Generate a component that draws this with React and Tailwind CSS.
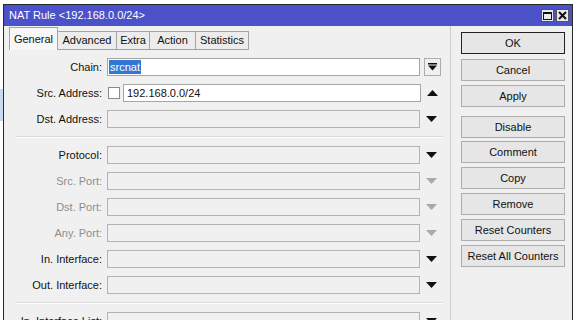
import React from "react";

const rows = [
  { label: "Chain:", kind: "chain" },
  { label: "Src. Address:", kind: "src" },
  { label: "Dst. Address:", arrow: "down" },
  { sep: true },
  { label: "Protocol:", arrow: "down" },
  { label: "Src. Port:", arrow: "down", off: true },
  { label: "Dst. Port:", arrow: "down", off: true },
  { label: "Any. Port:", arrow: "down", off: true },
  { label: "In. Interface:", arrow: "down" },
  { label: "Out. Interface:", arrow: "down" },
  { sep: true },
  { label: "In. Interface List:", arrow: "down" },
];

const buttons = [
  ["OK", "mb-[5px]"],
  ["Cancel", "mb-[4px]"],
  ["Apply", "mb-[9px]"],
  ["Disable", "mb-[3px]"],
  ["Comment", "mb-[4px]"],
  ["Copy", "mb-[4px]"],
  ["Remove", "mb-[4px]"],
  ["Reset Counters", "mb-[4px]"],
  ["Reset All Counters", ""],
];

const tabs = [
  ["General", "w-[49px]"],
  ["Advanced", "w-[59px]"],
  ["Extra", "w-[33px]"],
  ["Action", "w-[46px]"],
  ["Statistics", "w-[53px]"],
];

function Arrow({ dir = "down", off }) {
  return (
    <svg width="11" height="6" viewBox="0 0 11 6">
      <path
        d={dir === "down" ? "M0 0h11L5.5 6z" : "M0 6h11L5.5 0z"}
        fill={off ? "#a9a9a9" : "#111"}
      />
    </svg>
  );
}

function Row({ r }) {
  if (r.sep)
    return (
      <div className="ml-[11px] w-[428px] h-[2px] mb-[8px] border-t border-[#dadada] border-b border-b-white" />
    );
  return (
    <div className="flex items-center h-[18px] mb-[8px]">
      <div
        className={`w-[98px] text-right whitespace-nowrap ${r.off ? "text-[#8d8d8d]" : "text-[#111]"}`}
      >
        {r.label}
      </div>
      {r.kind === "src" ? (
        <>
          <div className="ml-[6px] w-[12px] h-[12px] bg-white border border-[#8a8a8a]" />
          <div className="ml-[3px] w-[298px] h-[18px] bg-white border border-[#a5a5a5] flex items-center pl-[3px] text-[#111]">
            192.168.0.0/24
          </div>
          <div className="w-[22px] flex justify-center">
            <Arrow dir="up" />
          </div>
        </>
      ) : r.kind === "chain" ? (
        <>
          <div className="ml-[5px] w-[313px] h-[18px] bg-white border border-[#a5a5a5] flex items-center pl-[1px]">
            <span className="bg-[#3178d4] text-white px-[1px] leading-[14px]">srcnat</span>
          </div>
          <div className="ml-[4px] w-[17px] h-[18px] border border-[#adadad] bg-[#f0f0f0] flex items-center justify-center">
            <svg width="9" height="8" viewBox="0 0 9 8">
              <rect x="0" y="0" width="9" height="1.5" fill="#111" />
              <path d="M0 2.5h9L4.5 7.5z" fill="#111" />
            </svg>
          </div>
        </>
      ) : (
        <>
          <div className="ml-[5px] w-[313px] h-[18px] bg-[#f0f0f0] border border-[#b3b3b3]" />
          <div className="w-[22px] flex justify-center">
            <Arrow off={r.off} />
          </div>
        </>
      )}
    </div>
  );
}

export default function App() {
  return (
    <div
      className="w-[573px] h-[320px] overflow-hidden bg-white flex flex-col text-[11px]"
      style={{ fontFamily: '"Liberation Sans", Arial, sans-serif' }}
    >
      <div className="h-[4px] bg-white shrink-0" />
      <div className="flex flex-1 min-h-0">
        <div className="w-[3px] shrink-0 flex flex-col">
          <div className="h-[85px]" />
          <div className="h-[32px] bg-[#c9d9ee]" />
        </div>
        <div className="flex-1 flex flex-col border-l border-t border-r border-[#2a2a2a] bg-[#f0f0f0] min-h-0">
          {/* title bar */}
          <div className="h-[21px] shrink-0 bg-[#4b51c9] flex items-center pl-[5px] pr-[3px]">
            <span className="text-white text-[11px]">NAT Rule &lt;192.168.0.0/24&gt;</span>
            <div className="ml-auto flex gap-[2px]">
              <div className="w-[13px] h-[13px] bg-[#e9e9e9] border border-[#555] flex items-center justify-center">
                <div className="w-[9px] h-[8px] border border-[#111] border-t-2" />
              </div>
              <div className="w-[13px] h-[13px] bg-[#e9e9e9] border border-[#555] flex items-center justify-center">
                <svg width="9" height="9" viewBox="0 0 9 9">
                  <path d="M1 1l7 7M8 1l-7 7" stroke="#111" strokeWidth="2" />
                </svg>
              </div>
            </div>
          </div>

          <div className="flex flex-1 min-h-0">
            {/* left panel */}
            <div className="w-[447px] shrink-0 border-r border-[#cdcdcd] flex flex-col min-h-0">
              <div className="flex items-end h-[24px] mt-[1px] pl-[5px]">
                {tabs.map(([t, w], i) => (
                  <div
                    key={t}
                    className={`${w} flex items-center justify-center border-[#a3a3a3] text-[#111] ${
                      i === 0
                        ? "h-[23px] border-l border-t border-r bg-[#f7f7f7]"
                        : "h-[19px] border-t border-r border-b bg-[#ececec]"
                    }`}
                  >
                    {t}
                  </div>
                ))}
              </div>
              <div className="pt-[8px]">
                {rows.map((r, i) => (
                  <Row key={i} r={r} />
                ))}
              </div>
            </div>

            {/* right buttons */}
            <div className="pl-[10px] pt-[6px] flex flex-col">
              {buttons.map(([b, mb]) => (
                <div
                  key={b}
                  className={`w-[104px] h-[22px] flex items-center justify-center text-[#111] bg-[#e6e6e6] border ${
                    b === "OK" ? "border-[#222]" : "border-[#adadad]"
                  } ${mb}`}
                >
                  {b}
                </div>
              ))}
            </div>
          </div>
        </div>
      </div>
    </div>
  );
}
